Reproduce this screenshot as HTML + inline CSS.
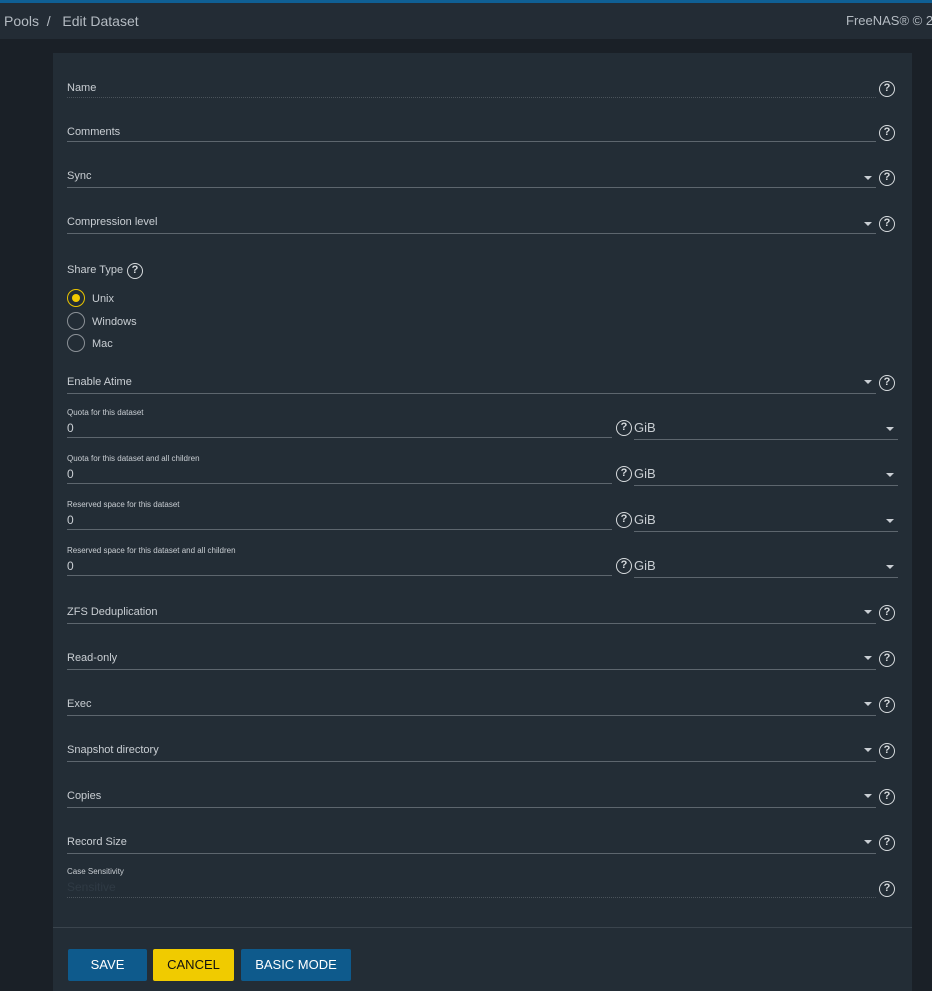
<!DOCTYPE html><html><head><meta charset="utf-8"><style>
*{margin:0;padding:0;box-sizing:border-box}
body{width:932px;height:991px;background:#1a2027;font-family:"Liberation Sans",sans-serif;position:relative;overflow:hidden;color:#c9ced3}
.top{position:absolute;left:0;top:0;width:932px;height:3px;background:#0f5f94}
.hdr{position:absolute;left:0;top:3px;width:932px;height:36px;background:#232c35;font-size:14px;color:#b4bbc2}
.card{position:absolute;left:53px;top:53px;width:859px;height:938px;background:#232d36}
.a{position:absolute;white-space:nowrap}
.l{font-size:11px;color:#c9ced3;margin-top:1px}
.s{font-size:8px;color:#c9ced3}
.v{font-size:12px;color:#c9ced3}
.ln{position:absolute;height:1px;background:#5d666e}
.dl{position:absolute;height:0;border-top:1px dotted #4a535b}
.h{position:absolute;width:16px;height:16px;border:1.6px solid #d6dadd;border-radius:50%;font-size:11px;font-weight:bold;color:#d6dadd;text-align:center;line-height:13px}
.ar{position:absolute;width:0;height:0;border-left:4px solid transparent;border-right:4px solid transparent;border-top:4px solid #c9ced3}
.r{position:absolute;left:67px;width:18px;height:18px;border:1.5px solid #8b9197;border-radius:50%}
.btn{position:absolute;top:949px;height:32px;font-size:13px;color:#fff;text-align:center;line-height:32px;border-radius:2px}
</style></head><body>
<div class="top"></div>
<div class="hdr"><span class="a" style="left:4px;top:10px">Pools&nbsp; /&nbsp;&nbsp; Edit Dataset</span><span class="a" style="left:846px;top:10px;font-size:13px">FreeNAS® © 2</span></div>
<div class="card"></div>

<span class="a l" style="left:67px;top:81px">Name</span><div class="dl" style="left:67px;top:97px;width:809px"></div><div class="h" style="left:879px;top:81px">?</div>
<span class="a l" style="left:67px;top:125px">Comments</span><div class="ln" style="left:67px;top:141px;width:809px"></div><div class="h" style="left:879px;top:125px">?</div>
<span class="a l" style="left:67px;top:169px">Sync</span><div class="ln" style="left:67px;top:187px;width:809px"></div><div class="ar" style="left:864px;top:176px"></div><div class="h" style="left:879px;top:170px">?</div>
<span class="a l" style="left:67px;top:215px">Compression level</span><div class="ln" style="left:67px;top:233px;width:809px"></div><div class="ar" style="left:864px;top:222px"></div><div class="h" style="left:879px;top:216px">?</div>

<span class="a l" style="left:67px;top:263px">Share Type</span><div class="h" style="left:127px;top:263px">?</div>
<div class="r" style="top:289px;border-color:#e8c300"><div style="position:absolute;left:3.5px;top:3.5px;width:8px;height:8px;border-radius:50%;background:#f0c800"></div></div><span class="a l" style="left:92px;top:292px">Unix</span>
<div class="r" style="top:312px"></div><span class="a l" style="left:92px;top:315px">Windows</span>
<div class="r" style="top:334px"></div><span class="a l" style="left:92px;top:337px">Mac</span>

<span class="a l" style="left:67px;top:375px">Enable Atime</span><div class="ln" style="left:67px;top:393px;width:809px"></div><div class="ar" style="left:864px;top:380px"></div><div class="h" style="left:879px;top:375px">?</div>

<span class="a s" style="left:67px;top:408px">Quota for this dataset</span><span class="a v" style="left:67px;top:421px">0</span><div class="ln" style="left:67px;top:437px;width:545px"></div><div class="h" style="left:616px;top:420px">?</div><span class="a v" style="left:634px;top:420px;font-size:13px">GiB</span><div class="ln" style="left:634px;top:439px;width:264px"></div><div class="ar" style="left:886px;top:427px"></div>
<span class="a s" style="left:67px;top:454px">Quota for this dataset and all children</span><span class="a v" style="left:67px;top:467px">0</span><div class="ln" style="left:67px;top:483px;width:545px"></div><div class="h" style="left:616px;top:466px">?</div><span class="a v" style="left:634px;top:466px;font-size:13px">GiB</span><div class="ln" style="left:634px;top:485px;width:264px"></div><div class="ar" style="left:886px;top:473px"></div>
<span class="a s" style="left:67px;top:500px">Reserved space for this dataset</span><span class="a v" style="left:67px;top:513px">0</span><div class="ln" style="left:67px;top:529px;width:545px"></div><div class="h" style="left:616px;top:512px">?</div><span class="a v" style="left:634px;top:512px;font-size:13px">GiB</span><div class="ln" style="left:634px;top:531px;width:264px"></div><div class="ar" style="left:886px;top:519px"></div>
<span class="a s" style="left:67px;top:546px">Reserved space for this dataset and all children</span><span class="a v" style="left:67px;top:559px">0</span><div class="ln" style="left:67px;top:575px;width:545px"></div><div class="h" style="left:616px;top:558px">?</div><span class="a v" style="left:634px;top:558px;font-size:13px">GiB</span><div class="ln" style="left:634px;top:577px;width:264px"></div><div class="ar" style="left:886px;top:565px"></div>

<span class="a l" style="left:67px;top:605px">ZFS Deduplication</span><div class="ln" style="left:67px;top:623px;width:809px"></div><div class="ar" style="left:864px;top:610px"></div><div class="h" style="left:879px;top:605px">?</div>
<span class="a l" style="left:67px;top:651px">Read-only</span><div class="ln" style="left:67px;top:669px;width:809px"></div><div class="ar" style="left:864px;top:656px"></div><div class="h" style="left:879px;top:651px">?</div>
<span class="a l" style="left:67px;top:697px">Exec</span><div class="ln" style="left:67px;top:715px;width:809px"></div><div class="ar" style="left:864px;top:702px"></div><div class="h" style="left:879px;top:697px">?</div>
<span class="a l" style="left:67px;top:743px">Snapshot directory</span><div class="ln" style="left:67px;top:761px;width:809px"></div><div class="ar" style="left:864px;top:748px"></div><div class="h" style="left:879px;top:743px">?</div>
<span class="a l" style="left:67px;top:789px">Copies</span><div class="ln" style="left:67px;top:807px;width:809px"></div><div class="ar" style="left:864px;top:794px"></div><div class="h" style="left:879px;top:789px">?</div>
<span class="a l" style="left:67px;top:835px">Record Size</span><div class="ln" style="left:67px;top:853px;width:809px"></div><div class="ar" style="left:864px;top:840px"></div><div class="h" style="left:879px;top:835px">?</div>
<span class="a s" style="left:67px;top:867px">Case Sensitivity</span><span class="a" style="left:67px;top:880px;font-size:12px;color:#2f3a44">Sensitive</span><div class="dl" style="left:67px;top:897px;width:809px"></div><div class="h" style="left:879px;top:881px">?</div>

<div class="ln" style="left:53px;top:927px;width:859px;background:#3a444d"></div>
<div class="btn" style="left:68px;width:79px;background:#0e5a8c">SAVE</div>
<div class="btn" style="left:153px;width:81px;background:#f0cb00;color:#111">CANCEL</div>
<div class="btn" style="left:241px;width:110px;background:#0e5a8c">BASIC MODE</div>
</body></html>
